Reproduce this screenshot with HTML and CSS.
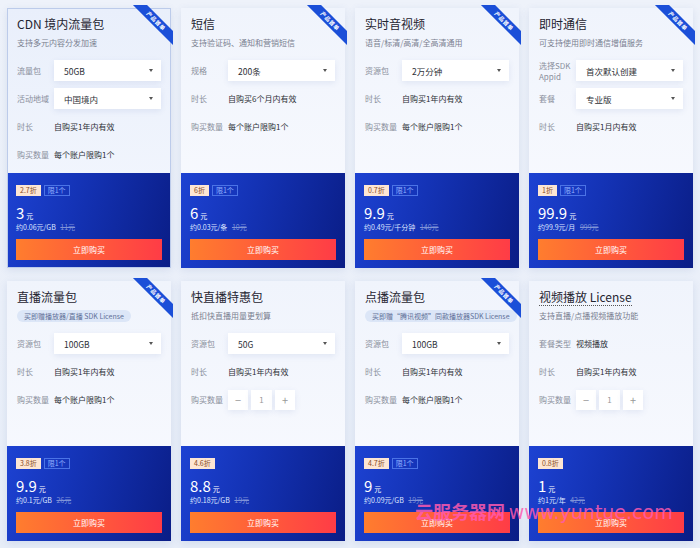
FILE: index.html
```html
<!DOCTYPE html>
<html lang="zh-CN">
<head>
  <meta charset="UTF-8" />
  <meta name="viewport" content="width=device-width, initial-scale=1.0" />
  <title>新用户专享</title>
  <link rel="stylesheet" href="styles.css">
</head>
<body>
  <div class="grid">

    <div class="card active">
      <div class="ribbon"><span>产品首单</span></div>
      <div class="card-top">
        <h3 class="title">CDN 境内流量包</h3>
        <p class="desc">支持多元内容分发加速</p>
        <div class="form">
          <div class="row"><span class="label">流量包</span><div class="select">50GB<i class="caret"></i></div></div>
          <div class="row"><span class="label">活动地域</span><div class="select">中国境内<i class="caret"></i></div></div>
          <div class="row"><span class="label">时长</span><span class="value">自购买1年内有效</span></div>
          <div class="row"><span class="label">购买数量</span><span class="value">每个账户限购1个</span></div>
        </div>
      </div>
      <div class="card-bottom">
        <div class="tags"><span class="tag tag-off">2.7折</span><span class="tag tag-limit">限1个</span></div>
        <div class="price">3<small>元</small></div>
        <div class="unit">约0.06元/GB <s>11元</s></div>
        <button class="buy">立即购买</button>
      </div>
    </div>

    <div class="card">
      <div class="ribbon"><span>产品首单</span></div>
      <div class="card-top">
        <h3 class="title">短信</h3>
        <p class="desc">支持验证码、通知和营销短信</p>
        <div class="form">
          <div class="row"><span class="label">规格</span><div class="select">200条<i class="caret"></i></div></div>
          <div class="row"><span class="label">时长</span><span class="value">自购买6个月内有效</span></div>
          <div class="row"><span class="label">购买数量</span><span class="value">每个账户限购1个</span></div>
        </div>
      </div>
      <div class="card-bottom">
        <div class="tags"><span class="tag tag-off">6折</span><span class="tag tag-limit">限1个</span></div>
        <div class="price">6<small>元</small></div>
        <div class="unit">约0.03元/条 <s>10元</s></div>
        <button class="buy">立即购买</button>
      </div>
    </div>

    <div class="card">
      <div class="ribbon"><span>产品首单</span></div>
      <div class="card-top">
        <h3 class="title">实时音视频</h3>
        <p class="desc">语音/标清/高清/全高清通用</p>
        <div class="form">
          <div class="row"><span class="label">资源包</span><div class="select">2万分钟<i class="caret"></i></div></div>
          <div class="row"><span class="label">时长</span><span class="value">自购买1年内有效</span></div>
          <div class="row"><span class="label">购买数量</span><span class="value">每个账户限购1个</span></div>
        </div>
      </div>
      <div class="card-bottom">
        <div class="tags"><span class="tag tag-off">0.7折</span><span class="tag tag-limit">限1个</span></div>
        <div class="price">9.9<small>元</small></div>
        <div class="unit">约0.49元/千分钟 <s>140元</s></div>
        <button class="buy">立即购买</button>
      </div>
    </div>

    <div class="card">
      <div class="ribbon"><span>产品首单</span></div>
      <div class="card-top">
        <h3 class="title">即时通信</h3>
        <p class="desc">可支持使用即时通信增值服务</p>
        <div class="form">
          <div class="row"><span class="label">选择SDK Appid</span><div class="select">首次默认创建<i class="caret"></i></div></div>
          <div class="row"><span class="label">套餐</span><div class="select">专业版<i class="caret"></i></div></div>
          <div class="row"><span class="label">时长</span><span class="value">自购买1月内有效</span></div>
        </div>
      </div>
      <div class="card-bottom">
        <div class="tags"><span class="tag tag-off">1折</span><span class="tag tag-limit">限1个</span></div>
        <div class="price">99.9<small>元</small></div>
        <div class="unit">约99.9元/月 <s>999元</s></div>
        <button class="buy">立即购买</button>
      </div>
    </div>

    <div class="card">
      <div class="ribbon"><span>产品首单</span></div>
      <div class="card-top">
        <h3 class="title">直播流量包</h3>
        <span class="pill">买即赠播放器/直播 SDK License</span>
        <div class="form">
          <div class="row"><span class="label">资源包</span><div class="select">100GB<i class="caret"></i></div></div>
          <div class="row"><span class="label">时长</span><span class="value">自购买1年内有效</span></div>
          <div class="row"><span class="label">购买数量</span><span class="value">每个账户限购1个</span></div>
        </div>
      </div>
      <div class="card-bottom">
        <div class="tags"><span class="tag tag-off">3.8折</span><span class="tag tag-limit">限1个</span></div>
        <div class="price">9.9<small>元</small></div>
        <div class="unit">约0.1元/GB <s>26元</s></div>
        <button class="buy">立即购买</button>
      </div>
    </div>

    <div class="card">
      <div class="card-top">
        <h3 class="title">快直播特惠包</h3>
        <p class="desc">抵扣快直播用量更划算</p>
        <div class="form">
          <div class="row"><span class="label">资源包</span><div class="select">50G<i class="caret"></i></div></div>
          <div class="row"><span class="label">时长</span><span class="value">自购买1年内有效</span></div>
          <div class="row"><span class="label">购买数量</span>
            <div class="stepper"><span class="step">−</span><span class="step num">1</span><span class="step">+</span></div>
          </div>
        </div>
      </div>
      <div class="card-bottom">
        <div class="tags"><span class="tag tag-off">4.6折</span></div>
        <div class="price">8.8<small>元</small></div>
        <div class="unit">约0.18元/GB <s>19元</s></div>
        <button class="buy">立即购买</button>
      </div>
    </div>

    <div class="card">
      <div class="ribbon"><span>产品首单</span></div>
      <div class="card-top">
        <h3 class="title">点播流量包</h3>
        <span class="pill">买即赠“腾讯视频”同款播放器SDK License</span>
        <div class="form">
          <div class="row"><span class="label">资源包</span><div class="select">100GB<i class="caret"></i></div></div>
          <div class="row"><span class="label">时长</span><span class="value">自购买1年内有效</span></div>
          <div class="row"><span class="label">购买数量</span><span class="value">每个账户限购1个</span></div>
        </div>
      </div>
      <div class="card-bottom">
        <div class="tags"><span class="tag tag-off">4.7折</span><span class="tag tag-limit">限1个</span></div>
        <div class="price">9<small>元</small></div>
        <div class="unit">约0.09元/GB <s>19元</s></div>
        <button class="buy">立即购买</button>
      </div>
    </div>

    <div class="card">
      <div class="card-top">
        <h3 class="title"><span class="dotted">视频播放 License</span></h3>
        <p class="desc">支持直播/点播视频播放功能</p>
        <div class="form">
          <div class="row"><span class="label">套餐类型</span><span class="value">视频播放</span></div>
          <div class="row"><span class="label">时长</span><span class="value">自购买1年内有效</span></div>
          <div class="row"><span class="label">购买数量</span>
            <div class="stepper"><span class="step">−</span><span class="step num">1</span><span class="step">+</span></div>
          </div>
        </div>
      </div>
      <div class="card-bottom">
        <div class="tags"><span class="tag tag-off">0.8折</span></div>
        <div class="price">1<small>元</small></div>
        <div class="unit">约1元/年 <s>42元</s></div>
        <button class="buy">立即购买</button>
      </div>
    </div>

  </div>

  <div class="watermark"><span class="wm-cn">云服务器网</span> <span class="wm-en">www.yuntue.com</span></div>
</body>
</html>
```

FILE: styles.css
```css
body {
  margin: 0;
  width: 700px;
  height: 548px;
  overflow: hidden;
  position: relative;
  font-family: "Noto Sans CJK SC", "Noto Sans", sans-serif;
  background: linear-gradient(180deg, #eef2fa 0%, #e7edf8 100%);
}

.grid {
  display: grid;
  grid-template-columns: repeat(4, 164px);
  column-gap: 10px;
  row-gap: 13px;
  padding: 8px 7px;
}

.card {
  position: relative;
  height: 260px;
  display: flex;
  flex-direction: column;
  background: linear-gradient(180deg, #f0f4fc 0%, #fafbff 100%);
  box-shadow: 0 2px 8px rgba(60, 90, 160, 0.12);
}

.card.active {
  outline: 1px solid #bccbea;
  outline-offset: -1px;
  background: linear-gradient(180deg, #e9effb 0%, #f5f8fe 100%);
}

.ribbon {
  position: absolute;
  top: -3px;
  right: -2px;
  width: 45px;
  height: 45px;
  overflow: hidden;
  z-index: 2;
}

.ribbon span {
  position: absolute;
  left: -7px;
  top: 11px;
  width: 70px;
  height: 10px;
  line-height: 10px;
  text-align: center;
  transform: rotate(45deg);
  background: #1b4fd8;
  color: #fff;
  font-size: 5.5px;
  font-weight: bold;
  letter-spacing: 0.5px;
}

.card-top {
  flex: 0 0 165px;
  box-sizing: border-box;
  padding: 8px 10px 0;
}

.title {
  margin: 0;
  font-size: 12px;
  line-height: 16px;
  font-weight: normal;
  color: #1f2430;
}

.dotted {
  border-bottom: 1px dotted #555;
}

.desc {
  margin: 5px 0 0;
  font-size: 8px;
  line-height: 12px;
  color: #7a8090;
}

.pill {
  display: block;
  width: fit-content;
  margin-top: 5px;
  height: 12px;
  line-height: 12px;
  padding: 0 7px;
  border-radius: 6px;
  background: #dce6f7;
  color: #5f7097;
  font-size: 7px;
  white-space: nowrap;
}

.form {
  margin-top: 11px;
  display: flex;
  flex-direction: column;
  gap: 7px;
}

.row {
  display: flex;
  align-items: center;
  height: 21px;
}

.label {
  width: 37px;
  flex: none;
  font-size: 8px;
  line-height: 11px;
  color: #8a8f9c;
}

.value {
  font-size: 8px;
  color: #2c2f36;
}

.select {
  flex: 1;
  height: 21px;
  display: flex;
  align-items: center;
  justify-content: space-between;
  padding: 0 8px 0 10px;
  background: #fff;
  box-shadow: 0 2px 6px rgba(60, 90, 160, 0.1);
  font-size: 8.5px;
  color: #2c2f36;
}

.caret {
  width: 0;
  height: 0;
  border-left: 2.5px solid transparent;
  border-right: 2.5px solid transparent;
  border-top: 3px solid #555;
}

.stepper {
  display: flex;
  gap: 3px;
}

.step {
  width: 20px;
  height: 20px;
  display: flex;
  align-items: center;
  justify-content: center;
  background: #fff;
  box-shadow: 0 2px 6px rgba(60, 90, 160, 0.1);
  font-size: 11px;
  color: #999;
}

.step.num {
  width: 21px;
  font-size: 8px;
}

.card-bottom {
  flex: 1;
  padding: 12px 9px 8px;
  background: linear-gradient(105deg, #1d42d2 0%, #1433b6 40%, #0a1d86 100%);
  color: #fff;
}

.tags {
  display: flex;
  gap: 3px;
  height: 11px;
}

.tag {
  box-sizing: border-box;
  height: 11px;
  padding: 0 3px;
  border: 1px solid;
  font-size: 7px;
  line-height: 9px;
}

.tag-off {
  background: #fde6d3;
  border-color: #fde6d3;
  color: #8a4d25;
}

.tag-limit {
  border-color: #4b73e6;
  color: #8fb0ff;
}

.price {
  margin-top: 8px;
  height: 18px;
  line-height: 18px;
  font-size: 15px;
}

.price small {
  margin-left: 2px;
  font-size: 7px;
}

.unit {
  font-size: 7px;
  line-height: 10px;
  color: #dfe6ff;
}

.unit s {
  margin-left: 3px;
  color: #7f93d8;
}

.buy {
  display: block;
  width: 100%;
  height: 21px;
  margin-top: 7px;
  border: 0;
  background: linear-gradient(90deg, #ff7d2e 0%, #ff3c46 100%);
  color: #fff;
  font-family: inherit;
  font-size: 8px;
}

.watermark {
  position: absolute;
  left: 415px;
  top: 498px;
  color: rgba(255, 90, 175, 0.85);
  font-weight: bold;
  white-space: nowrap;
}

.wm-cn {
  font-size: 18px;
}

.wm-en {
  font-family: "DejaVu Sans", sans-serif;
  font-weight: normal;
  font-size: 19px;
}
```
